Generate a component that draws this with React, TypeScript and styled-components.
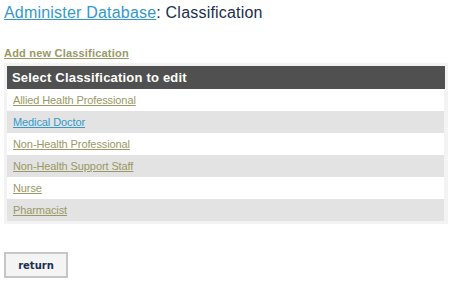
import React from "react";
import styled, { createGlobalStyle } from "styled-components";

const Global = createGlobalStyle`
  html, body { margin: 0; padding: 0; background: #ffffff; }
  body { font-family: "Liberation Sans", Arial, sans-serif; }
`;

const Page = styled.div`
  padding: 4px 6px 0 4px;
  display: flex;
  flex-direction: column;
  align-items: flex-start;
`;

const Title = styled.h1`
  margin: 0;
  font-size: 16px;
  line-height: 18px;
  font-weight: normal;
  letter-spacing: 0.2px;
  color: #1c2f4d;
`;

const TitleLink = styled.a`
  color: #3399cc;
  text-decoration: underline;
`;

const AddLink = styled.a`
  margin-top: 25px;
  font-size: 11px;
  line-height: 13px;
  font-weight: bold;
  letter-spacing: 0.2px;
  color: #999966;
  text-decoration: underline;
`;

const Panel = styled.div`
  align-self: stretch;
  margin-top: 3px;
  background: #f3f3f3;
  padding: 3px;
  display: flex;
  flex-direction: column;
`;

const Header = styled.div`
  background: #505050;
  color: #ffffff;
  font-size: 13px;
  font-weight: bold;
  line-height: 23px;
  padding-left: 5px;
  letter-spacing: 0.2px;
`;

const Row = styled.div<{ $alt: boolean }>`
  background: ${(p) => (p.$alt ? "#e3e3e3" : "#ffffff")};
  height: 22px;
  line-height: 22px;
  padding-left: 6px;
  margin-right: 1px;
  font-size: 11px;
  letter-spacing: -0.1px;
`;

const RowLink = styled.a<{ $active?: boolean }>`
  color: ${(p) => (p.$active ? "#3399cc" : "#999966")};
  text-decoration: underline;
`;

const ReturnButton = styled.button`
  margin-top: 28px;
  width: 64px;
  height: 26px;
  background: #f4f4f4;
  border: 2px solid #c6c6c6;
  font-family: "DejaVu Sans", Verdana, sans-serif;
  font-weight: bold;
  font-size: 10px;
  color: #1c2f4d;
  padding: 0;
`;

const items = [
  "Allied Health Professional",
  "Medical Doctor",
  "Non-Health Professional",
  "Non-Health Support Staff",
  "Nurse",
  "Pharmacist",
];

export default function App() {
  return (
    <>
      <Global />
      <Page>
        <Title>
          <TitleLink href="#">Administer Database</TitleLink>: Classification
        </Title>
        <AddLink href="#">Add new Classification</AddLink>
        <Panel>
          <Header>Select Classification to edit</Header>
          {items.map((it, i) => (
            <Row key={it} $alt={i % 2 === 1}>
              <RowLink href="#" $active={it === "Medical Doctor"}>
                {it}
              </RowLink>
            </Row>
          ))}
        </Panel>
        <ReturnButton>return</ReturnButton>
      </Page>
    </>
  );
}
